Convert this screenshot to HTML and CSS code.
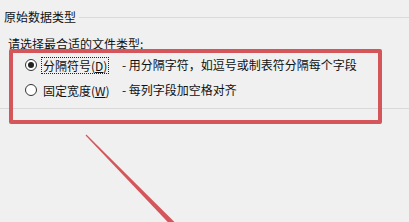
FILE: index.html
```html
<!DOCTYPE html>
<html lang="zh-CN">
<head>
    <meta charset="UTF-8">
    <title>文本导入向导</title>
    <link rel="stylesheet" href="styles.css">
</head>
<body>
    <div class="group-head">
        <span class="group-title">原始数据类型</span>
        <span class="group-line"></span>
    </div>
    <div class="prompt">请选择最合适的文件类型:</div>

    <div class="option">
        <span class="radio checked"></span>
        <span class="label focused">分隔符号(<u>D</u>)</span>
        <span class="desc">- 用分隔字符，如逗号或制表符分隔每个字段</span>
    </div>
    <div class="option">
        <span class="radio"></span>
        <span class="label">固定宽度(<u>W</u>)</span>
        <span class="desc">- 每列字段加空格对齐</span>
    </div>
    <div class="separator"></div>

    <!-- annotation overlay -->
    <div class="highlight"></div>
    <svg class="arrow" width="409" height="222" viewBox="0 0 409 222">
        <polygon points="85.6,135.4 86.4,134.6 178.5,226 171.5,226" fill="#d4565a"/>
    </svg>
</body>
</html>
```

FILE: styles.css
```css
body, html {
    margin: 0;
    padding: 0;
    height: 100%;
    overflow: hidden;
}
body {
    position: relative;
    background: #f0f0f0;
    color: #111;
    font-family: "Noto Sans CJK SC", "Noto Sans", sans-serif;
    font-size: 12px;
    line-height: 14px;
}

/* Group header */
.group-head {
    display: flex;
    align-items: center;
    padding: 10px 0 0 4px;
}
.group-title {
    margin-right: 3px;
}
.group-line {
    flex: 1;
    border-top: 1px solid #dadada;
}

.prompt {
    margin-top: 13px;
    padding-left: 8px;
}

/* Radio options */
.option {
    display: flex;
    align-items: center;
    height: 16px;
    margin-top: 6px;
    padding-left: 25px;
    white-space: nowrap;
}
.option + .option {
    margin-top: 9px;
}
.radio {
    position: relative;
    flex: none;
    width: 12px;
    height: 12px;
    box-sizing: border-box;
    border: 1px solid #333;
    border-radius: 50%;
    background: #fff;
}
.radio.checked::after {
    content: '';
    position: absolute;
    left: 2px;
    top: 2px;
    width: 6px;
    height: 6px;
    border-radius: 50%;
    background: #222;
}
.label {
    flex: none;
    margin-left: 4px;
    width: 68px;
    height: 17px;
    box-sizing: border-box;
    padding: 1px 0 0 1px;
    border: 1px dotted transparent;
    line-height: 14px;
}
.label.focused {
    border-color: #222;
}
.label u {
    text-underline-offset: 1px;
}
.desc {
    margin-left: 13px;
}

.separator {
    margin-top: 10px;
    border-top: 1px solid #d9d9d9;
}

/* Annotation */
.highlight {
    position: absolute;
    left: 9px;
    top: 49px;
    width: 373px;
    height: 75px;
    box-sizing: border-box;
    border: 4px solid #d4565a;
    border-radius: 2px;
}
.arrow {
    position: absolute;
    left: 0;
    top: 0;
}
```
